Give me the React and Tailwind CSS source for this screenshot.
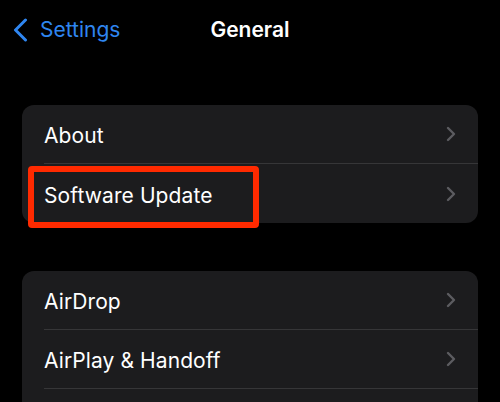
const groups = [
  ['About', 'Software Update'],
  ['AirDrop', 'AirPlay & Handoff', '']
]

function Chevron() {
  return (
    <svg width="10" height="16" viewBox="0 0 10 16" fill="none" className="shrink-0">
      <polyline points="2,2 8,8 2,14" stroke="#5c5c60" strokeWidth="2.4" strokeLinecap="round" strokeLinejoin="round" />
    </svg>
  )
}

function Row({ label, highlight, last }) {
  return (
    <div className="relative pl-[22px]">
      <div className={`h-[59px] flex items-center justify-between pr-[22px] ${last ? '' : 'border-b border-[#363638]'}`}>
        <span className="text-[21px] text-white tracking-[0.1px] translate-y-[2px]">{label}</span>
        {label && <Chevron />}
      </div>
      {highlight && (
        <div className="absolute left-[6px] top-[2px] w-[231px] h-[62px] border-[6px] border-[#ff2a00] rounded-[4px]" />
      )}
    </div>
  )
}

export default function App() {
  return (
    <div className="w-[500px] h-[402px] overflow-hidden bg-black" style={{ fontFamily: 'Inter, "Liberation Sans", sans-serif' }}>
      <div className="relative h-[60px] flex items-center">
        <div className="flex items-center pl-[13px] text-[#2f86f0]">
          <svg width="15" height="24" viewBox="0 0 15 24" fill="none">
            <polyline points="12.5,2 2.5,12 12.5,22" stroke="currentColor" strokeWidth="3" strokeLinecap="round" strokeLinejoin="round" />
          </svg>
          <span className="ml-[12px] text-[21px]">Settings</span>
        </div>
        <div className="absolute left-0 right-0 text-center text-[21px] font-semibold text-white pointer-events-none">General</div>
      </div>

      <div className="mt-[45px] px-[22px] flex flex-col gap-[48px]">
        {groups.map((g, gi) => (
          <div key={gi} className="bg-[#1c1c1e] rounded-[12px]">
            {g.map((label, i) => (
              <Row key={i} label={label} highlight={label === 'Software Update'} last={i === g.length - 1} />
            ))}
          </div>
        ))}
      </div>
    </div>
  )
}
